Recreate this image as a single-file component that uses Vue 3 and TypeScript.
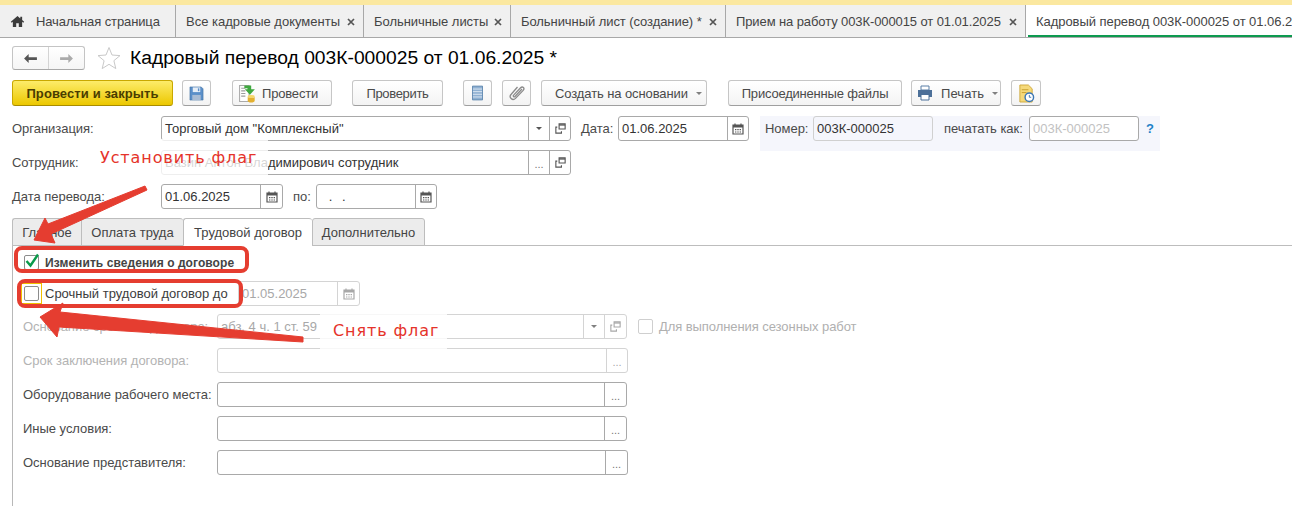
<script setup lang="ts">
interface Tab { title: string; width: number; closable: boolean; active?: boolean; home?: boolean; spacing: number }
const tabs: Tab[] = [
  { title: 'Начальная страница', width: 176, closable: false, home: true, spacing: -0.11 },
  { title: 'Все кадровые документы', width: 188, closable: true, spacing: 0 },
  { title: 'Больничные листы', width: 147, closable: true, spacing: -0.05 },
  { title: 'Больничный лист (создание) *', width: 215, closable: true, spacing: -0.07 },
  { title: 'Прием на работу 003К-000015 от 01.01.2025', width: 300, closable: true, spacing: -0.1 },
  { title: 'Кадровый перевод 003К-000025 от 01.06.2025', width: 266, closable: false, active: true, spacing: -0.05 }
]
const formTabs = ['Главное', 'Оплата труда', 'Трудовой договор', 'Дополнительно']
</script>

<template>
  <div class="page">
    <svg class="sprite" width="0" height="0" aria-hidden="true">
      <symbol id="cal" viewBox="0 0 14 14">
        <path d="M2 3h10v9H2z" fill="none" stroke="currentColor" stroke-width="1.2" />
        <path d="M2 3h10v2.5H2z" fill="currentColor" />
        <path d="M4 1.500v2M10 1.500v2" stroke="currentColor" stroke-width="1.2" />
        <path d="M4 7h1.400v1.200H4zM6.300 7h1.400v1.200H6.300zM8.600 7H10v1.200H8.600zM4 9.400h1.400v1.200H4zM6.300 9.400h1.400v1.200H6.300zM8.600 9.400H10v1.200H8.600z" fill="currentColor" />
      </symbol>
      <symbol id="open" viewBox="0 0 14 14">
        <path d="M5.500 2h6.500v5.500H5.500z" fill="none" stroke="currentColor" stroke-width="1.2" />
        <path d="M5.500 3.200h6.500" stroke="currentColor" stroke-width="1.4" />
        <path d="M3.500 5.500H2v6.500h6v-2" fill="none" stroke="currentColor" stroke-width="1.2" />
      </symbol>
    </svg>

    <div class="strip"></div>

    <nav class="tabs">
      <div
        v-for="t in tabs"
        :key="t.title"
        class="tab"
        :class="{ active: t.active, home: t.home }"
        :style="{ width: t.width + 'px', letterSpacing: t.spacing + 'px' }"
      >
        <svg v-if="t.home" class="home-ico" viewBox="0 0 16 14" width="15" height="13">
          <path d="M8 1 .8 7.400l1 1L3 7.400V13h3.600V9h2.800v4H13V7.400l1.200 1 1-1L13 5.400V2h-2v1.700z" fill="#3c3c3c" />
        </svg>
        <span class="tab-title">{{ t.title }}</span>
        <svg v-if="t.closable" class="close" viewBox="0 0 8 8" width="8" height="8">
          <path d="M1 1l6 6M7 1 1 7" stroke="#555" stroke-width="1.700" />
        </svg>
        <i v-if="t.active" class="underline"></i>
      </div>
    </nav>

    <header class="head">
      <div class="nav">
        <button class="nav-b">
          <svg viewBox="0 0 16 12" width="15" height="11"><path d="M6 1 1 6l5 5V7.500h9v-3H6z" fill="#555" /></svg>
        </button>
        <button class="nav-b">
          <svg viewBox="0 0 16 12" width="15" height="11"><path d="m10 1 5 5-5 5V7.500H1v-3h9z" fill="#aaa" /></svg>
        </button>
      </div>
      <svg class="star" viewBox="0 0 24 24" width="24" height="24">
        <path d="M12 1.500l3 7.500 8 .6-6.100 5.100 1.900 7.900L12 18.300l-6.800 4.300 1.900-7.900L1 9.600 9 9z" fill="#fff" stroke="#c9c9c9" />
      </svg>
      <h1 class="title">Кадровый перевод 003К-000025 от 01.06.2025 *</h1>
    </header>

    <div class="toolbar">
      <button class="btn primary w161">Провести и закрыть</button>
      <button class="btn ico w29 ml9">
        <svg viewBox="0 0 16 16" width="15" height="15">
          <path d="M1 1h12l2 2v12H1z" fill="#5b8fc9" stroke="#41709f" stroke-width=".6" />
          <path d="M4 1.500h8v5H4z" fill="#e6eef7" />
          <path d="M3.500 9.500h9V15h-9z" fill="#a9bcd4" />
          <path d="M9.500 2.500h1.500v3H9.500z" fill="#5b8fc9" />
        </svg>
      </button>
      <button class="btn start w100 ml21 prov">
        <svg viewBox="0 0 18 18" width="19" height="19">
          <path d="M1.500 1.500h9v15h-9z" fill="#fff" stroke="#aaa" />
          <path d="M3 4h4M3 6.500h4M3 9h4M3 11.500h4" stroke="#9c9c9c" />
          <path d="M6 1.500h6.500v3.500H16l-4.700 5.200L6.500 5H9V4H6z" fill="#3fa83f" />
          <ellipse cx="12.500" cy="11.800" rx="3.300" ry="1.400" fill="#f5d76b" />
          <path d="M9.200 12v4c0 .8 1.500 1.500 3.300 1.500s3.300-.7 3.300-1.500v-4c0 .8-1.500 1.300-3.300 1.300S9.200 12.800 9.200 12z" fill="#e3b030" />
        </svg>
        <span>Провести</span>
      </button>
      <button class="btn w91 ml20 check-btn">Проверить</button>
      <button class="btn ico w29 ml20">
        <svg viewBox="0 0 12 16" width="11" height="16">
          <path d="M.5.500h11v15H.5z" fill="#8fb0d2" stroke="#5b84ad" />
          <path d="M1 3.700h10M1 6.500h10M1 9.400h10M1 12.300h10" stroke="#dfe9f3" />
        </svg>
      </button>
      <button class="btn ico w29 ml10">
        <svg viewBox="0 0 16 16" width="16" height="16">
          <path d="M13 4 6 11.500c-1 1-2.400-.4-1.400-1.400l7-7.400c2-2 4.500.7 2.600 2.700l-7.700 8c-3 3-7.200-1.200-4.300-4.200L8.500 2" fill="none" stroke="#8a8a8a" stroke-width="1.300" />
        </svg>
      </button>
      <button class="btn start w166 ml10 create">
        <span>Создать на основании</span><i class="caret"></i>
      </button>
      <button class="btn w174 ml21 files">Присоединенные файлы</button>
      <button class="btn start w90 ml9 printb">
        <svg viewBox="0 0 16 16" width="16" height="16">
          <path d="M4 1h8v4H4z" fill="#fff" stroke="#5b7fa6" />
          <path d="M1 5h14v7H1z" fill="#4d7099" />
          <path d="M4 9.500h8V15H4z" fill="#fff" stroke="#4d7099" />
        </svg>
        <span>Печать</span><i class="caret"></i>
      </button>
      <button class="btn ico w30 ml10">
        <svg viewBox="0 0 18 20" width="17" height="19">
          <path d="M2 1h9l4 4v14H2z" fill="#f5d97a" stroke="#cfa93d" />
          <path d="M4 6h7M4 9h5" stroke="#c79f2e" />
          <circle cx="12" cy="14" r="4.500" fill="#fff" stroke="#3a76b5" stroke-width="1.500" />
          <path d="M12 11.500V14h2" stroke="#3a76b5" fill="none" />
        </svg>
      </button>
    </div>

    <section class="top-form">
      <div class="row">
        <label class="lbl w149">Организация:</label>
        <div class="field w410">
          <span class="val">Торговый дом "Комплексный"</span>
          <span class="fb narrow"><i class="caret dark"></i></span>
          <span class="fb narrow"><svg width="13" height="13"><use href="#open" /></svg></span>
        </div>
        <label class="lbl date-lbl">Дата:</label>
        <div class="field w131">
          <span class="val">01.06.2025</span>
          <span class="fb narrow"><svg width="14" height="14"><use href="#cal" /></svg></span>
        </div>
        <div class="numbers">
          <label class="lbl num-lbl">Номер:</label>
          <div class="field ro w120"><span class="val">003К-000025</span></div>
          <label class="lbl print-lbl">печатать как:</label>
          <div class="field w110"><span class="val ghost">003К-000025</span></div>
          <span class="help">?</span>
        </div>
      </div>
      <div class="row r2">
        <label class="lbl w149">Сотрудник:</label>
        <div class="field w410">
          <span class="val">Вазин Антон Владимирович сотрудник</span>
          <span class="fb narrow dots">...</span>
          <span class="fb narrow"><svg width="13" height="13"><use href="#open" /></svg></span>
        </div>
      </div>
      <div class="row r3">
        <label class="lbl w149">Дата перевода:</label>
        <div class="field w122">
          <span class="val">01.06.2025</span>
          <span class="fb wide"><svg width="14" height="14"><use href="#cal" /></svg></span>
        </div>
        <label class="lbl po-lbl">по:</label>
        <div class="field w121">
          <span class="val blank">&nbsp;&nbsp;.&nbsp;&nbsp;.</span>
          <span class="fb narrow"><svg width="14" height="14"><use href="#cal" /></svg></span>
        </div>
      </div>
    </section>

    <div class="ftabs">
      <div
        v-for="(f, i) in formTabs"
        :key="f"
        class="ftab"
        :class="['ft' + i, { on: i === 2 }]"
      >{{ f }}</div>
    </div>

    <section class="panel">
      <div class="p-row first">
        <span class="check"><svg viewBox="0 0 16 16" width="16" height="16"><path d="M2.500 8 6.500 12.500 14 1.500" fill="none" stroke="#0a9a4a" stroke-width="2.400" /></svg></span>
        <span class="chk-lbl strong">Изменить сведения о договоре</span>
      </div>
      <div class="p-row second">
        <span class="focus"><span class="check"></span></span>
        <span class="chk-lbl term">Срочный трудовой договор до</span>
        <div class="field off w122">
          <span class="val">01.05.2025</span>
          <span class="fb wide"><svg width="14" height="14"><use href="#cal" /></svg></span>
        </div>
      </div>
      <div class="p-row third">
        <label class="plbl muted">Основание срочного договора:</label>
        <div class="field off w410">
          <span class="val">абз. 4 ч. 1 ст. 59</span>
          <span class="fb narrow"><i class="caret"></i></span>
          <span class="fb wide"><svg width="13" height="13"><use href="#open" /></svg></span>
        </div>
        <span class="check off season"></span>
        <span class="season-lbl">Для выполнения сезонных работ</span>
      </div>
      <div class="p-row gap9">
        <label class="plbl muted">Срок заключения договора:</label>
        <div class="field off w411">
          <span class="val"></span>
          <span class="fb narrow dots">...</span>
        </div>
      </div>
      <div class="p-row gap9">
        <label class="plbl">Оборудование рабочего места:</label>
        <div class="field w410">
          <span class="val"></span>
          <span class="fb wide dots">...</span>
        </div>
      </div>
      <div class="p-row gap9">
        <label class="plbl">Иные условия:</label>
        <div class="field w410">
          <span class="val"></span>
          <span class="fb wide dots">...</span>
        </div>
      </div>
      <div class="p-row gap9">
        <label class="plbl">Основание представителя:</label>
        <div class="field w411">
          <span class="val"></span>
          <span class="fb wide dots">...</span>
        </div>
      </div>
    </section>

    <div class="patch patch-a"></div>
    <div class="patch patch-b"></div>
    <div class="note note-a">Установить флаг</div>
    <div class="note note-b">Снять флаг</div>

    <svg class="marks" width="1292" height="506" viewBox="0 0 1292 506">
      <path d="M145 186 48 224 45 218 34 240 55 243 51 234 147 190z" fill="#e53d30" stroke="#e53d30" stroke-linejoin="round" />
      <rect x="16" y="248" width="231" height="23" rx="6" fill="none" stroke="#e53d30" stroke-width="4" />
      <rect x="19" y="281" width="222" height="25" rx="6" fill="none" stroke="#e53d30" stroke-width="4" />
      <path d="M303 337 60 312 63 303 40 317 57 337 59 327 303 342z" fill="#e53d30" stroke="#e53d30" stroke-linejoin="round" />
    </svg>
  </div>
</template>

<style>
html, body { margin: 0; background: #fff; overflow: hidden; }
</style>

<style scoped>
.page {
  position: relative;
  width: 1292px;
  height: 506px;
  overflow: hidden;
  background: #fff;
  font-family: "Liberation Sans", Arial, sans-serif;
  font-size: 13px;
  color: #4a4a4a;
}
.sprite { position: absolute; }
.strip { height: 5px; background: #fbe8a0; }

.tabs {
  display: flex;
  height: 32px;
  background: #f0f0f0;
  border-bottom: 1px solid #a8a8a8;
}
.tab {
  position: relative;
  box-sizing: border-box;
  flex: none;
  display: flex;
  align-items: center;
  padding-left: 10px;
  border-right: 1px solid #a8a8a8;
  white-space: nowrap;
  overflow: hidden;
  color: #444;
}
.tab.active { background: #fff; border-right: 0; }
.home-ico { margin-right: 11px; flex: none; }
.tab-title { flex: none; }
.close { position: absolute; right: 8px; top: 13px; }
.underline {
  position: absolute;
  left: 2px;
  right: 0;
  bottom: 0;
  height: 2px;
  background: #0d9a4f;
}

.head {
  display: flex;
  align-items: center;
  height: 24px;
  margin: 8px 0 0 12px;
}
.nav {
  display: flex;
  width: 73px;
  height: 24px;
  box-sizing: border-box;
  border: 1px solid #c4c4c4;
  border-bottom-color: #a8a8a8;
  border-radius: 3px;
  background: linear-gradient(#fff, #f5f5f5);
}
.nav-b {
  flex: 1;
  border: 0;
  background: none;
  padding: 0;
  display: flex;
  align-items: center;
  justify-content: center;
}
.nav-b + .nav-b { border-left: 1px solid #d4d4d4; }
.star { margin-left: 12px; flex: none; }
.title {
  margin: 0 0 0 9px;
  font-size: 19.25px;
  font-weight: 400;
  color: #000;
  white-space: nowrap;
}

.toolbar {
  display: flex;
  align-items: stretch;
  height: 26px;
  margin: 10px 0 0 12px;
}
.btn {
  box-sizing: border-box;
  display: flex;
  align-items: center;
  justify-content: center;
  padding: 0;
  border: 1px solid #c6c6c6;
  border-bottom-color: #9f9f9f;
  border-radius: 3px;
  background: linear-gradient(#fff, #f3f3f3);
  font: inherit;
  color: #4a4a4a;
  white-space: nowrap;
}
.btn.start { justify-content: flex-start; }
.prov { padding-left: 5px; gap: 5px; letter-spacing: -.18px; }
.check-btn { letter-spacing: -.32px; }
.create { padding-left: 13px; gap: 8px; letter-spacing: -.1px; }
.files { letter-spacing: -.2px; }
.printb { padding-left: 5px; gap: 8px; letter-spacing: .1px; }
.primary {
  border-color: #c9a800;
  border-bottom-color: #a88c00;
  background: linear-gradient(#fdec6a, #ecc800);
  color: #4a3d00;
  font-weight: 700;
  letter-spacing: .1px;
}
.w161 { width: 161px; }
.w29 { width: 29px; }
.w30 { width: 30px; }
.w100 { width: 100px; }
.w91 { width: 91px; }
.w166 { width: 166px; }
.w174 { width: 174px; }
.w90 { width: 90px; }
.ml9 { margin-left: 9px; }
.ml10 { margin-left: 10px; }
.ml20 { margin-left: 20px; }
.ml21 { margin-left: 21px; }
.caret {
  display: inline-block;
  width: 0;
  height: 0;
  border-left: 3px solid transparent;
  border-right: 3px solid transparent;
  border-top: 3px solid #808080;
}
.caret.dark { border-top-color: #555; }

.top-form { margin: 10px 0 0 12px; }
.row { display: flex; align-items: center; height: 25px; }
.r2, .r3 { margin-top: 9px; }
.lbl { flex: none; white-space: nowrap; color: #4a4a4a; letter-spacing: -.03px; }
.w149 { width: 149px; }
.date-lbl { margin-left: 10px; width: 37px; }
.po-lbl { margin-left: 10px; width: 23px; }
.field {
  box-sizing: border-box;
  flex: none;
  display: flex;
  align-items: stretch;
  height: 25px;
  border: 1px solid #a9a9a9;
  border-radius: 3px;
  background: #fff;
  color: #333;
}
.val {
  flex: 1;
  min-width: 0;
  padding-left: 3px;
  line-height: 23px;
  white-space: nowrap;
  overflow: hidden;
}
.val.ghost { color: #c2c2c2; }
.val.blank { letter-spacing: .8px; }
.fb {
  flex: none;
  box-sizing: border-box;
  display: flex;
  align-items: center;
  justify-content: center;
  border-left: 1px solid #a9a9a9;
  color: #555;
}
.narrow { width: 21px; }
.wide { width: 22px; }
.dots { font-size: 11px; color: #777; padding-top: 2px; }
.w131 { width: 131px; }
.w122 { width: 122px; }
.w121 { width: 121px; }
.w120 { width: 120px; }
.w110 { width: 110px; }
.w410 { width: 410px; }
.w411 { width: 411px; }
.numbers {
  display: flex;
  align-items: center;
  align-self: flex-start;
  box-sizing: border-box;
  width: 400px;
  height: 35px;
  margin-left: 11px;
  padding: 0 0 10px 5px;
  background: #f5f6fc;
}
.num-lbl { width: 48px; }
.ro { background: #f5f6fc; border-color: #d0d0d0; }
.print-lbl { margin-left: 11px; width: 85px; }
.help { margin-left: 7px; color: #1e82c8; font-weight: 700; }

.ftabs {
  position: relative;
  display: flex;
  height: 27px;
  margin: 9px 0 0 12px;
  border-bottom: 1px solid #bdbdbd;
}
.ftab {
  box-sizing: border-box;
  flex: none;
  height: 28px;
  line-height: 27px;
  text-align: center;
  background: #ececec;
  border: 1px solid #bdbdbd;
  border-right: 0;
  border-radius: 3px 3px 0 0;
  color: #444;
}
.ft0 { width: 69px; }
.ft1 { width: 102px; }
.ft2 { width: 129px; background: #fff; border-bottom-color: #fff; }
.ft3 { width: 113px; border-right: 1px solid #bdbdbd; }

.panel {
  box-sizing: border-box;
  height: 260px;
  margin-left: 12px;
  padding: 4px 0 0 10px;
  border-left: 1px solid #b8b8b8;
}
.p-row { display: flex; align-items: center; height: 25px; }
.second { margin-top: 6px; }
.third { margin-top: 8px; }
.gap9 { margin-top: 9px; }
.check {
  box-sizing: border-box;
  flex: none;
  display: block;
  width: 15px;
  height: 15px;
  margin-left: 1px;
  border: 1px solid #8c8c8c;
  border-radius: 2px;
  background: #fff;
}
.check.off { border-color: #cfcfcf; margin-left: 11px; }
.check svg { display: block; margin: -3px 0 0 -1px; }
.focus {
  box-sizing: border-box;
  flex: none;
  display: flex;
  align-items: center;
  justify-content: center;
  width: 21px;
  height: 21px;
  margin-left: -2px;
  border: 1px solid #f0c000;
}
.focus .check { margin-left: 0; }
.chk-lbl { margin-left: 6px; white-space: nowrap; color: #3c3c3c; }
.strong { font-weight: 700; font-size: 12px; letter-spacing: .07px; color: #444; }
.term { margin-left: 3px; width: 193px; }
.plbl { flex: none; width: 194px; white-space: nowrap; color: #4a4a4a; letter-spacing: -.03px; }
.muted { color: #b3b3b3; }
.off { border-color: #d4d4d4; color: #a8a8a8; }
.off .fb { border-color: #d4d4d4; color: #a8a8a8; }
.season-lbl { margin-left: 6px; color: #b0b0b0; white-space: nowrap; letter-spacing: -.07px; }

.patch { position: absolute; background: rgba(255, 255, 255, .8); }
.patch-a { left: 100px; top: 139px; width: 168px; height: 36px; }
.patch-b { left: 320px; top: 313px; width: 127px; height: 36px; }
.note {
  position: absolute;
  font-family: "DejaVu Sans", sans-serif;
  color: #e5332a;
  white-space: nowrap;
  font-size: 16px;
  letter-spacing: .9px;
}
.note-a { left: 100px; top: 148px; }
.note-b { left: 333px; top: 321px; }
.marks { position: absolute; left: 0; top: 0; pointer-events: none; }
</style>
